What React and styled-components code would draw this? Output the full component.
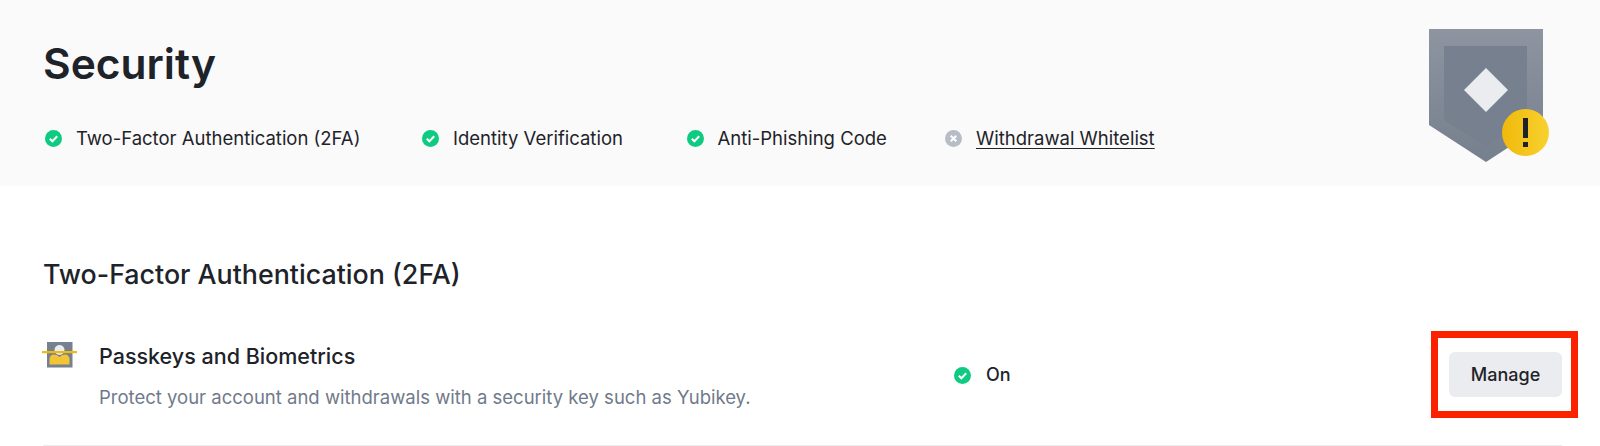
import React from 'react';
import styled, { createGlobalStyle } from 'styled-components';

const Global = createGlobalStyle`
  html, body { margin: 0; padding: 0; background: #fff; }
  body { font-family: "Inter", "Noto Sans", sans-serif; color: #1e2329; width: 1600px; height: 446px; overflow: hidden; }
`;
const Hero = styled.header`
  height: 186px; background: #fafafa; box-sizing: border-box; padding: 0 49px 0 43px;
  display: flex; justify-content: space-between;
`;
const HeroMain = styled.div`display: flex; flex-direction: column;`;
const Title = styled.h1`margin: 39px 0 0; font-size: 42.5px; line-height: 50px; font-weight: 600;`;
const StatusList = styled.ul`
  list-style: none; margin: 37px 0 0; padding: 0 0 0 2px;
  display: grid; grid-template-columns: 377px 264.5px 258.5px auto;
`;
const StatusItem = styled.li`display: flex; align-items: center; gap: 14px; font-size: 18.5px; line-height: 24px;`;
const StatusLink = styled.a`color: #1e2329; text-decoration: underline; text-underline-offset: 3px;`;
const ShieldWrap = styled.div`margin-top: 29px; width: 122px;`;
const Section = styled.section`padding: 0 38px 0 43px;`;
const SectionTitle = styled.h2`margin: 71px 0 0; font-size: 26.8px; line-height: 34px; font-weight: 500;`;
const Row = styled.div`
  display: flex; align-items: flex-start; margin-top: 51px; height: 104px; box-sizing: border-box;
  border-bottom: 1px solid #eaecef;
`;
const RowIcon = styled.div`width: 36px; margin-left: -1px;`;
const RowText = styled.div`width: 855px; margin-left: 21px;`;
const RowTitle = styled.div`font-size: 21.5px; line-height: 28px; font-weight: 500;`;
const RowSub = styled.div`margin-top: 15px; font-size: 18.5px; line-height: 24px; color: #707a8a;`;
const RowStatus = styled.div`display: flex; align-items: center; gap: 15px; font-size: 18px; line-height: 24px; font-weight: 500; margin-top: 21px; flex: 1;`;
const Highlight = styled.div`
  box-sizing: border-box; flex: none; width: 147px; height: 87px; border: 7px solid #fc2200; margin: -11px -16px 0 0;
  padding-left: 11px; display: flex; align-items: center;
`;
const Manage = styled.button`
  width: 113px; height: 45px; padding: 0; border: 0; border-radius: 6px; background: #eaecef; color: #1e2329;
  font: 500 18px/24px "Inter", sans-serif;
`;

const Check = () => (
  <svg width="17" height="17" viewBox="0 0 17 17"><circle cx="8.5" cy="8.5" r="8.5" fill="#0ecb81"/><path d="M4.8 8.7l2.6 2.6 4.8-5" fill="none" stroke="#fff" strokeWidth="2"/></svg>
);
const Cross = () => (
  <svg width="17" height="17" viewBox="0 0 17 17"><circle cx="8.5" cy="8.5" r="8.5" fill="#b7bdc6"/><path d="M5.7 5.7l5.6 5.6M11.3 5.7l-5.6 5.6" fill="none" stroke="#fff" strokeWidth="2"/></svg>
);
const Shield = () => (
  <svg width="122" height="136" viewBox="0 0 122 136">
    <defs><linearGradient id="g" x1="0" y1="0" x2="0" y2="1"><stop offset="0" stopColor="#8e95a1"/><stop offset="1" stopColor="#767f8d"/></linearGradient>
    <linearGradient id="y" x1="0" y1="0" x2="1" y2="0"><stop offset="0" stopColor="#f0b90b"/><stop offset="1" stopColor="#f8d12f"/></linearGradient></defs>
    <path d="M0 0H114V96L57 133L0 96Z" fill="url(#g)"/>
    <path d="M15 17H98V91L57 118L15 91Z" fill="#76808f"/>
    <path d="M57 39L79 61L57 83L35 61Z" fill="#eaecef"/>
    <circle cx="96.5" cy="103.5" r="23.5" fill="url(#y)"/>
    <rect x="94" y="89" width="5" height="20" fill="#1e2329"/><rect x="94" y="113" width="5" height="5" fill="#1e2329"/>
  </svg>
);
const Passkey = () => (
  <svg width="36" height="26" viewBox="0 0 36 26">
    <rect x="5" y="0" width="25.5" height="25.5" fill="#76808f"/>
    <circle cx="17.5" cy="8" r="5" fill="#eaecef"/>
    <path d="M7.500 22.500V16.500q1-4 4.500-4q3.500 0 5.500 2.500q2-2.500 5.500-2.500q3.500 0 4.500 4V22.500z" fill="#f3c435"/>
    <rect x="0" y="9" width="35" height="2.200" fill="#f0b90b"/>
  </svg>
);

export default function App() {
  return (
    <>
      <Global />
      <Hero>
        <HeroMain>
          <Title>Security</Title>
          <StatusList>
            <StatusItem><Check />Two-Factor Authentication (2FA)</StatusItem>
            <StatusItem><Check />Identity Verification</StatusItem>
            <StatusItem><Check />Anti-Phishing Code</StatusItem>
            <StatusItem><Cross /><StatusLink>Withdrawal Whitelist</StatusLink></StatusItem>
          </StatusList>
        </HeroMain>
        <ShieldWrap><Shield /></ShieldWrap>
      </Hero>
      <Section>
        <SectionTitle>Two-Factor Authentication (2FA)</SectionTitle>
        <Row>
          <RowIcon><Passkey /></RowIcon>
          <RowText>
            <RowTitle>Passkeys and Biometrics</RowTitle>
            <RowSub>Protect your account and withdrawals with a security key such as Yubikey.</RowSub>
          </RowText>
          <RowStatus><Check />On</RowStatus>
          <Highlight><Manage>Manage</Manage></Highlight>
        </Row>
      </Section>
    </>
  );
}
